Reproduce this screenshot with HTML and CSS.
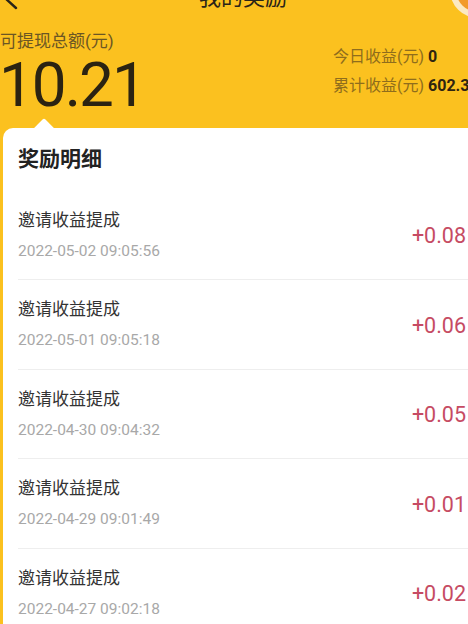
FILE: index.html
```html
<!DOCTYPE html>
<html lang="zh-CN">
<head>
<meta charset="utf-8">
<title>我的奖励</title>
<link rel="stylesheet" href="styles.css">
</head>
<body>
<div class="page">
  <div class="nav">
    <svg class="back" width="24" height="24" viewBox="0 0 24 24"><path d="M16 -12 L5 -2 L16 8" fill="none" stroke="#2a2418" stroke-width="2.4" stroke-linecap="round" stroke-linejoin="round"/></svg>
    <div class="nav-title">我的奖励</div>
    <svg class="coin" width="44" height="24" viewBox="0 0 44 24"><circle cx="38" cy="-10" r="28" fill="#fbe9c2"/><circle cx="38" cy="-10" r="22" fill="#f29a2a"/></svg>
  </div>
  <div class="summary">
    <div class="total">
      <div class="total-label">可提现总额(元)</div>
      <div class="total-value">10.21</div>
    </div>
    <div class="stats">
      <div class="stat">今日收益(元) <b>0</b></div>
      <div class="stat">累计收益(元) <b>602.31</b></div>
    </div>
  </div>
  <div class="card">
    <div class="card-title">奖励明细</div>
    <div class="list">
      <div class="row"><div class="info"><div class="name">邀请收益提成</div><div class="time">2022-05-02 09:05:56</div></div><div class="amount">+0.08</div></div>
      <div class="row"><div class="info"><div class="name">邀请收益提成</div><div class="time">2022-05-01 09:05:18</div></div><div class="amount">+0.06</div></div>
      <div class="row"><div class="info"><div class="name">邀请收益提成</div><div class="time">2022-04-30 09:04:32</div></div><div class="amount">+0.05</div></div>
      <div class="row"><div class="info"><div class="name">邀请收益提成</div><div class="time">2022-04-29 09:01:49</div></div><div class="amount">+0.01</div></div>
      <div class="row"><div class="info"><div class="name">邀请收益提成</div><div class="time">2022-04-27 09:02:18</div></div><div class="amount">+0.02</div></div>
    </div>
  </div>
</div>
</body>
</html>
```
FILE: styles.css
```css
html, body {
  margin: 0;
  padding: 0;
  overflow: hidden;
  background: #fbc11f;
}
body {
  font-family: Roboto, "Noto Sans CJK SC", sans-serif;
  color: #333;
}
.page {
  width: 486px;
  position: relative;
  background: #fbc11f;
  min-height: 624px;
}
.nav {
  height: 44px;
  margin-top: -24px;
  display: flex;
  align-items: center;
  justify-content: center;
  position: relative;
}
.nav-title {
  font-size: 22px;
  color: #2a2418;
  line-height: 44px;
}
.back {
  position: absolute;
  left: 0;
  top: 24px;
  overflow: visible;
}
.coin {
  position: absolute;
  left: 440px;
  top: 24px;
  overflow: visible;
}
.summary {
  display: flex;
  align-items: flex-start;
  padding-top: 10px;
  height: 98px;
}
.total-label {
  font-size: 17px;
  line-height: 23px;
  color: #6b5624;
}
.total-value {
  font-size: 62px;
  line-height: 64px;
  letter-spacing: -2px;
  color: #2b2312;
  margin-left: -1px;
}
.stats {
  margin-left: auto;
  padding-top: 12px;
  width: 153px;
}
.stat {
  font-size: 16px;
  line-height: 29px;
  color: #8f6d1c;
  white-space: nowrap;
}
.stat b {
  color: #2f2410;
  font-weight: 700;
}
.card {
  position: relative;
  background: #fff;
  margin-left: 3px;
  border-radius: 10px 0 0 0;
  min-height: 500px;
}
.card::before {
  content: "";
  position: absolute;
  left: 34px;
  top: -7px;
  width: 14px;
  height: 14px;
  background: #fff;
  transform: rotate(45deg);
  border-radius: 2px 0 0 0;
}
.card-title {
  font-size: 21px;
  font-weight: 700;
  line-height: 28px;
  color: #222;
  padding: 17px 0 17.5px 15px;
}
.list {
  margin-left: 15px;
}
.row {
  display: flex;
  align-items: center;
  padding: 18px 0 18.5px;
  border-bottom: 1px solid #eeeeee;
}
.info {
  flex: 1;
}
.name {
  font-size: 17px;
  line-height: 22px;
  color: #333;
}
.time {
  font-size: 15.5px;
  line-height: 20px;
  margin-top: 10px;
  color: #a8a8a8;
}
.amount {
  font-size: 21.5px;
  color: #c64b63;
  margin-right: 20px;
  padding-top: 2px;
}
```
